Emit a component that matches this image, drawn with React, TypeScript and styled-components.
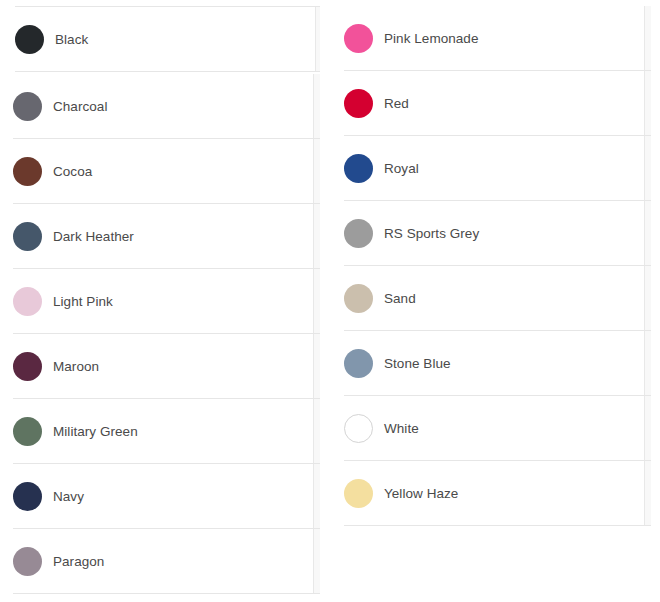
import React from 'react';
import styled, { createGlobalStyle } from 'styled-components';

const GlobalStyle = createGlobalStyle`
  body {
    margin: 0;
    background: #ffffff;
    font-family: 'Liberation Sans', Arial, sans-serif;
  }
`;

type Swatch = { name: string; color: string; outline?: boolean };

const leftTop: Swatch[] = [{ name: 'Black', color: '#24282b' }];

const leftMain: Swatch[] = [
  { name: 'Charcoal', color: '#67676f' },
  { name: 'Cocoa', color: '#6b392c' },
  { name: 'Dark Heather', color: '#45576a' },
  { name: 'Light Pink', color: '#e8c9d9' },
  { name: 'Maroon', color: '#5a2841' },
  { name: 'Military Green', color: '#5f7461' },
  { name: 'Navy', color: '#263150' },
  { name: 'Paragon', color: '#978a95' },
];

const right: Swatch[] = [
  { name: 'Pink Lemonade', color: '#f2529a' },
  { name: 'Red', color: '#d40030' },
  { name: 'Royal', color: '#224a8e' },
  { name: 'RS Sports Grey', color: '#9c9c9c' },
  { name: 'Sand', color: '#cbbfad' },
  { name: 'Stone Blue', color: '#8196ac' },
  { name: 'White', color: '#ffffff', outline: true },
  { name: 'Yellow Haze', color: '#f4df9f' },
];

const Page = styled.div`
  display: flex;
  align-items: flex-start;
  gap: 24px;
  padding: 6px 0 0 13px;
`;

const Column = styled.div`
  display: flex;
  flex-direction: column;
  gap: 2px;
  width: 307px;
`;

// list panel with a thin scroll track drawn at the right edge
const Panel = styled.div<{ width: number; offset?: number; topBorder?: boolean }>`
  width: ${({ width }) => width}px;
  margin-left: ${({ offset }) => offset || 0}px;
  border-top: ${({ topBorder }) => (topBorder ? '1px solid #e6e6e6' : 'none')};
  background: linear-gradient(
    to right,
    transparent 300px,
    #e8e8e8 300px,
    #e8e8e8 301px,
    #f8f8f8 301px
  );
`;

const Row = styled.div`
  display: flex;
  align-items: center;
  gap: 11px;
  height: 64px;
  border-bottom: 1px solid #e6e6e6;
`;

const Dot = styled.span<{ color: string; outline?: boolean }>`
  flex: none;
  width: 29px;
  height: 29px;
  border-radius: 50%;
  box-sizing: border-box;
  background: ${({ color }) => color};
  border: ${({ outline }) => (outline ? '1px solid #d4d4d4' : 'none')};
`;

const Label = styled.span`
  font-size: 13.5px;
  color: #4a4a4a;
  letter-spacing: 0.05px;
`;

const SwatchList = ({ items }: { items: Swatch[] }) => (
  <>
    {items.map((s) => (
      <Row key={s.name}>
        <Dot color={s.color} outline={s.outline} />
        <Label>{s.name}</Label>
      </Row>
    ))}
  </>
);

export default function App() {
  return (
    <>
      <GlobalStyle />
      <Page>
        <Column>
          <Panel width={305} offset={2} topBorder>
            <SwatchList items={leftTop} />
          </Panel>
          <Panel width={307}>
            <SwatchList items={leftMain} />
          </Panel>
        </Column>
        <Column>
          <Panel width={307}>
            <SwatchList items={right} />
          </Panel>
        </Column>
      </Page>
    </>
  );
}
